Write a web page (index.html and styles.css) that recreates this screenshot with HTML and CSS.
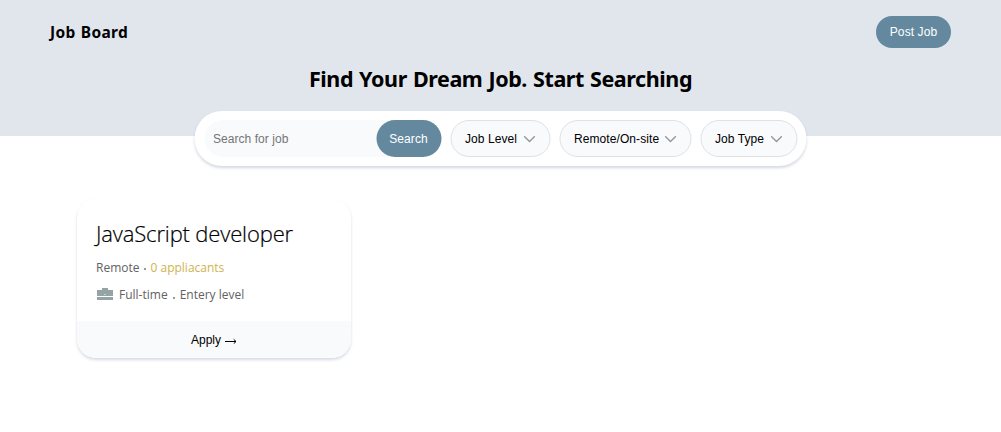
FILE: index.html
```html
<!DOCTYPE html>
<html lang="en">
<head>
<meta charset="utf-8">
<title>Job Board</title>
<link rel="stylesheet" href="styles.css">
</head>
<body>
<header class="hero">
  <nav class="nav">
    <span class="brand">Job Board</span>
    <button class="btn post">Post Job</button>
  </nav>
  <h1 class="headline">Find Your Dream Job. Start Searching</h1>
  <div class="filters">
    <form class="search">
      <input class="search-input" type="text" placeholder="Search for job">
      <button class="btn search-btn" type="button">Search</button>
    </form>
    <button class="filter level"><span>Job Level</span><svg class="chevron" viewBox="0 0 12 8"><path d="M.7 1.2 6 6.500l5.300-5.300"/></svg></button>
    <button class="filter place"><span>Remote/On-site</span><svg class="chevron" viewBox="0 0 12 8"><path d="M.7 1.2 6 6.500l5.300-5.300"/></svg></button>
    <button class="filter type"><span>Job Type</span><svg class="chevron" viewBox="0 0 12 8"><path d="M.7 1.2 6 6.500l5.300-5.300"/></svg></button>
  </div>
</header>
<main class="jobs">
  <article class="card">
    <div class="card-body">
      <h2 class="title">JavaScript developer</h2>
      <p class="meta"><span class="remote">Remote</span><i class="dot"></i><span class="applicants">0 appliacants</span></p>
      <p class="meta second"><svg class="case" viewBox="0 0 16 13"><path d="M5 0h6v2h5v6H0V2h5Z"/><path d="M0 9h16v3H0z"/><path class="clasp" d="M7.500 6h1v1h-1z"/></svg><span class="time">Full-time</span><i class="dot low"></i><span class="entry">Entery level</span></p>
    </div>
    <button class="apply"><span>Apply</span><svg class="arrow" viewBox="0 0 12 6"><path d="M0 3.500h11"/><path d="M8.700 1.300 11 3.500 8.700 5.700"/></svg></button>
  </article>
</main>
</body>
</html>
```

FILE: styles.css
```css
* { box-sizing: border-box; }
body { margin: 0; background: #fff; color: #000; font-family: "Open Sans", "Noto Sans", sans-serif; }
button, input { font: 12px "Liberation Sans", Arial, sans-serif; border: 0; margin: 0; }
h1, h2, p { margin: 0; white-space: nowrap; }
.hero { height: 136px; background: #e1e6ed; display: flex; flex-direction: column; align-items: center; }
.nav { width: 100%; height: 64px; flex: none; padding: 0 50px; display: flex; align-items: center; justify-content: space-between; }
.brand { font: 700 15.5px/20px "Noto Sans", sans-serif; letter-spacing: .3px; word-spacing: 1px; }
.btn { background: #64899f; color: #fff; border-radius: 18px; padding: 0; }
.post { width: 75px; height: 32px; letter-spacing: .1px; }
.headline { font: 700 21.5px/30px "Noto Sans", sans-serif; letter-spacing: -.42px; word-spacing: .9px; flex: none; }
.filters { width: 612px; height: 55px; flex: none; margin: 17px 0 0; padding: 0 10px; display: flex; align-items: center; background: #fff; border-radius: 28px; box-shadow: 0 2px 3px rgba(100, 115, 140, .28); transform: translateX(-.5px); }
.search { width: 237px; height: 37px; display: flex; background: #f8fafc; border-radius: 19px; margin-right: 9px; }
.search-input { width: 172px; padding: 0 9px; background: transparent; outline: 0; letter-spacing: .05px; }
.search-input::placeholder { color: #757575; }
.search-btn { width: 65px; border-radius: 19px; letter-spacing: .1px; }
.filter { height: 37px; flex: none; border: 1px solid #dfe1e4; border-radius: 19px; background: #f8fafc; color: #000; padding: 0 14px; display: flex; align-items: center; justify-content: space-between; white-space: nowrap; letter-spacing: .08px; }
.level { width: 100px; margin-right: 9px; }
.place { width: 132px; margin-right: 9px; }
.type { width: 97px; }
.chevron { width: 12px; height: 8px; flex: none; fill: none; stroke: #929598; stroke-width: 1.3; }
.jobs { padding: 63px 77px; }
.card { width: 274px; height: 159px; display: flex; flex-direction: column; border-radius: 19px; background: #fff; overflow: hidden; box-shadow: 0 2px 3px rgba(100, 115, 140, .26); }
.card-body { height: 122px; padding: 17px 18px 0 19px; }
.title { font-size: 22px; line-height: 34px; font-weight: 300; letter-spacing: -.15px; -webkit-text-stroke: .2px #000; }
.meta { display: flex; align-items: center; height: 20px; margin-top: 8px; font-size: 12px; line-height: 20px; color: #626262; }
.second { margin-top: 7px; }
.applicants { color: #d0b34d; }
.dot { width: 2px; height: 2px; margin: 2px 5px 0 4px; background: #999; }
.low { margin: 5px 5px 0; }
.case { width: 16px; height: 13px; margin: -1px 6px 0 1px; fill: #94a4a5; }
.clasp { fill: #fff; }
.apply { height: 37px; background: #f8fafc; display: flex; align-items: center; justify-content: center; gap: 4px; color: #000; }
.arrow { width: 12px; height: 6px; margin-top: 3px; fill: none; stroke: #000; stroke-width: 1; }
```
